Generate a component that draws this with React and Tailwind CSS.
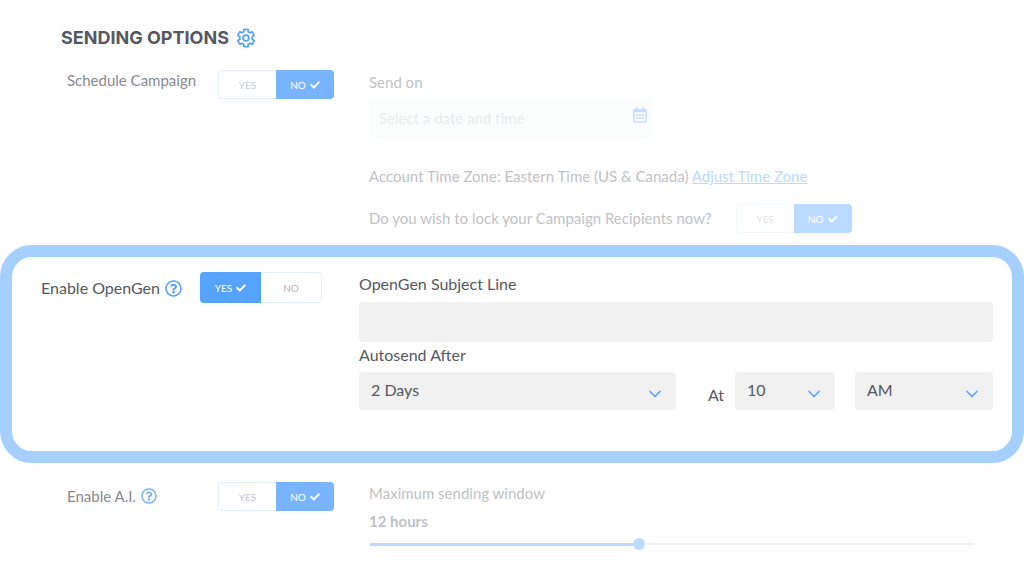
import React, { useState } from "react";
import { FaCheck, FaRegQuestionCircle } from "react-icons/fa";
import { ChevronDown } from "lucide-react";

const toggleStyles = {
    strong: {
        size: "w-[122px] h-[31px]",
        border: "border-[#e1eeff]",
        active: "bg-[#55a3fc] text-white",
        idle: "bg-white text-[#b4b6ba]",
    },
    normal: {
        size: "w-[116px] h-[29px]",
        border: "border-[#e1eeff]",
        active: "bg-[#78b4fd] text-white",
        idle: "bg-white text-[#c6c8cb]",
    },
    faded: {
        size: "w-[116px] h-[29px]",
        border: "border-[#f2f7ff]",
        active: "bg-[#bbdaff] text-white",
        idle: "bg-white text-[#e2e3e5]",
    },
};

function YesNo({ labelledBy, initial, variant = "normal" }) {
    const [value, setValue] = useState(initial);
    const s = toggleStyles[variant];

    return (
        <div role="group" aria-labelledby={labelledBy} className={`grid grid-cols-2 shrink-0 ${s.size}`}>
            {["YES", "NO"].map((option) => (
                <button
                    key={option}
                    type="button"
                    aria-pressed={value === option}
                    onClick={() => setValue(option)}
                    className={`flex items-center justify-center gap-1 pt-px text-[10px] cursor-pointer first:rounded-l last:rounded-r ${
                        value === option ? s.active : `border first:border-r-0 last:border-l-0 ${s.border} ${s.idle}`
                    }`}
                >
                    {option}
                    {value === option && <FaCheck size={10} />}
                </button>
            ))}
        </div>
    );
}

function SelectBox({ label, options, className }) {
    return (
        <div className={`grid items-center ${className}`}>
            <select
                aria-label={label}
                className="col-start-1 row-start-1 w-full h-[38px] appearance-none rounded bg-[#f1f1f1] pl-3 pr-8 pb-0.5 text-base text-[#555863]"
            >
                {options.map((o) => (
                    <option key={o}>{o}</option>
                ))}
            </select>
            <ChevronDown
                size={20}
                className="col-start-1 row-start-1 justify-self-end mr-[11px] mt-1.5 text-[#55a3fc] pointer-events-none"
            />
        </div>
    );
}

function GearIcon() {
    return (
        <svg width="20" height="20" viewBox="0 0 20 20" fill="none" stroke="currentColor" strokeWidth="1.8" strokeLinejoin="round" className="text-[#55a3fc]" aria-hidden="true">
            <path d="M7.8 1.6Q10 1 12.2 1.6V3.8L14 4.8L15.9 3.7Q17.5 5.3 18.1 7.5L16.2 8.7V11.3L18.1 12.5Q17.5 14.7 15.9 16.3L14 15.2L12.2 16.2V18.4Q10 19 7.8 18.4V16.2L6 15.2L4.1 16.3Q2.5 14.7 1.9 12.5L3.8 11.3V8.7L1.9 7.5Q2.5 5.3 4.1 3.7L6 4.8L7.8 3.8Z" />
            <circle cx="10" cy="10" r="2.9" />
        </svg>
    );
}

function CalendarIcon() {
    return (
        <svg width="14" height="16" viewBox="0 0 14 16" fill="none" stroke="currentColor" aria-hidden="true">
            <rect x="0.8" y="2.8" width="12.4" height="12.2" rx="1" strokeWidth="1.5" />
            <path d="M1 4h12" strokeWidth="2.4" />
            <path d="M4 .3v3M10 .3v3" strokeWidth="1.8" />
            <path d="M3.2 8h2M6 8h2M8.8 8h2M3.2 11h2M6 11h2M8.8 11h2" strokeWidth="2" />
        </svg>
    );
}

function App() {
    const [hours, setHours] = useState(12);
    const max = 27;
    const filled = (hours / max) * 100;

    return (
        <main className="bg-white font-[Lato,sans-serif] text-[15px] text-[#555863]">
            <form className="ml-8 mr-[38px] rounded-[20px] border border-[#fcfcfc] pb-9">
                <h1 className="flex items-center gap-[7px] pl-7 pt-[25px] h-[49px] font-[Inter,sans-serif] text-lg leading-6 font-bold">
                    SENDING OPTIONS
                    <GearIcon />
                </h1>

                <div className="mt-5 grid grid-cols-[151px_151px_1fr] pl-[34px]">
                    <span id="schedule" className="leading-5 text-[#878991]">Schedule Campaign</span>
                    <YesNo labelledBy="schedule" initial="NO" />
                    <div className="text-[#c0c2c6]">
                        <label htmlFor="sendOn" className="block leading-6">Send on</label>
                        <div className="mt-1 flex h-10 w-[284px] items-center rounded bg-[#fbfdfd] pr-1.5">
                            <input
                                id="sendOn"
                                type="text"
                                placeholder="Select a date and time"
                                className="h-full min-w-0 flex-1 pl-2.5 placeholder:text-[#e9eaeb]"
                            />
                            <button type="button" aria-label="Open calendar" className="mb-1.5 text-[#c4dfff]">
                                <CalendarIcon />
                            </button>
                        </div>
                        <p className="mt-[26px] leading-6">
                            Account Time Zone: Eastern Time (US &amp; Canada){" "}
                            <a href="#timezone" className="text-[#bbdaff] underline">Adjust Time Zone</a>
                        </p>
                        <div className="mt-4 flex items-center gap-6">
                            <span id="lock">Do you wish to lock your Campaign Recipients now?</span>
                            <YesNo labelledBy="lock" initial="NO" variant="faded" />
                        </div>
                    </div>
                </div>

                <section className="-ml-[33px] -mr-[39px] mt-3 grid grid-cols-[159px_159px_1fr] rounded-[32px] border-12 border-[#a5cfff] bg-white pt-[15px] pb-[41px] pl-[29px] pr-[19px] text-base">
                    <div className="flex h-8 items-center gap-[5px]">
                        <span id="openGen">Enable OpenGen</span>
                        <button type="button" aria-label="About OpenGen" className="text-[#55a3fc]">
                            <FaRegQuestionCircle size={17} />
                        </button>
                    </div>
                    <YesNo labelledBy="openGen" initial="YES" variant="strong" />
                    <div>
                        <label htmlFor="subject" className="block leading-6">OpenGen Subject Line</label>
                        <input id="subject" type="text" className="mt-1.5 block h-10 w-full rounded bg-[#f1f1f1] px-3" />
                        <span className="mt-px block leading-6">Autosend After</span>
                        <div className="mt-[5px] flex items-center">
                            <SelectBox label="Autosend after" options={["2 Days", "3 Days", "4 Days"]} className="flex-1" />
                            <span className="ml-8 mr-[11px] mt-2">At</span>
                            <SelectBox label="Hour" options={["10", "11", "12"]} className="w-[100px]" />
                            <SelectBox label="AM or PM" options={["AM", "PM"]} className="ml-5 w-[138px]" />
                        </div>
                    </div>
                </section>

                <div className="mt-[19px] grid grid-cols-[151px_151px_1fr] pl-[34px] pr-[11px]">
                    <div className="flex h-7 items-center gap-[5px] text-[#878991]">
                        <span id="ai">Enable A.I.</span>
                        <button type="button" aria-label="About A.I." className="text-[#78b4fd]">
                            <FaRegQuestionCircle size={16} />
                        </button>
                    </div>
                    <YesNo labelledBy="ai" initial="NO" />
                    <div className="text-[#c0c2c6]">
                        <label htmlFor="sendWindow" className="block leading-[22px]">Maximum sending window</label>
                        <output htmlFor="sendWindow" className="mt-[5px] block leading-6 font-bold">{hours} hours</output>
                        <div className="ml-px mt-[5px] grid items-center">
                            <div className="col-start-1 row-start-1 h-0.5 bg-[#f1f1f1]"></div>
                            <div className="col-start-1 row-start-1 h-[3px] bg-[#bbdaff]" style={{ width: `${filled}%` }}></div>
                            <input
                                id="sendWindow"
                                type="range"
                                min={0}
                                max={max}
                                value={hours}
                                onChange={(e) => setHours(Number(e.target.value))}
                                className="col-start-1 row-start-1 h-3 w-full appearance-none bg-transparent [&::-webkit-slider-thumb]:size-3 [&::-webkit-slider-thumb]:appearance-none [&::-webkit-slider-thumb]:rounded-full [&::-webkit-slider-thumb]:bg-[#bbdaff]"
                            />
                        </div>
                    </div>
                </div>
            </form>
        </main>
    );
}

export default App;
